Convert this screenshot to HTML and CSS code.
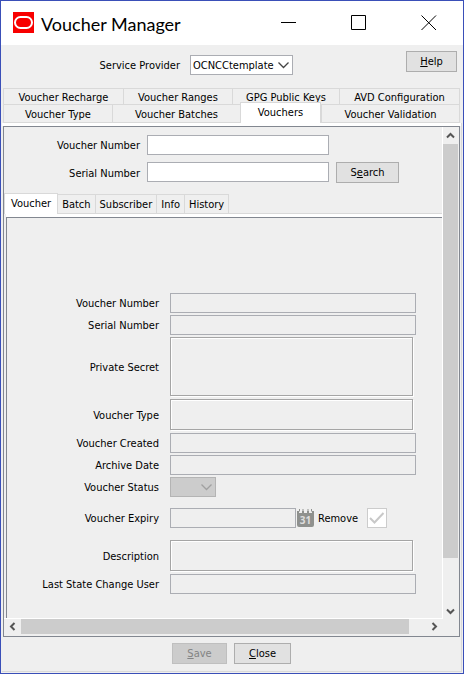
FILE: index.html
```html
<!DOCTYPE html>
<html lang="en">
<head>
<meta charset="utf-8">
<title>Voucher Manager</title>
<link rel="stylesheet" href="styles.css">
</head>
<body>
<div class="window">
  <header class="titlebar">
    <svg class="logo" width="21" height="21" viewBox="0 0 21 21" aria-hidden="true"><rect width="21" height="21" fill="#f80000"/><rect x="2" y="5" width="17" height="11" rx="5.5" fill="none" stroke="#fff" stroke-width="2"/></svg>
    <h1 class="title">Voucher Manager</h1>
    <button class="winbtn" aria-label="Minimize"><svg width="16" height="16" viewBox="0 0 16 16"><path d="M0 7.500H15" stroke="#000" fill="none"/></svg></button>
    <button class="winbtn" aria-label="Maximize"><svg width="16" height="16" viewBox="0 0 16 16"><path d="M.5 .5H14.500V14.500H.5Z" stroke="#000" fill="none"/></svg></button>
    <button class="winbtn" aria-label="Close window"><svg width="16" height="16" viewBox="0 0 16 16"><path d="M.5 .5L15 15M15 .5L.5 15" stroke="#000" fill="none"/></svg></button>
  </header>

  <div class="provider">
    <label for="provider">Service Provider</label>
    <span class="combo combo-provider">
      <select id="provider"><option>OCNCCtemplate</option></select>
      <svg class="chevron" width="11" height="7" viewBox="0 0 11 7" aria-hidden="true"><path d="M.5 .5L5.500 5.500L10.500 .5" fill="none" stroke="#444" stroke-width="1.300"/></svg>
    </span>
    <button class="btn help"><u>H</u>elp</button>
  </div>

  <nav class="tabs">
    <div class="tabrow tabrow-back">
      <button class="tab">Voucher Recharge</button>
      <button class="tab">Voucher Ranges</button>
      <button class="tab">GPG Public Keys</button>
      <button class="tab">AVD Configuration</button>
    </div>
    <div class="tabrow tabrow-front">
      <button class="tab">Voucher Type</button>
      <button class="tab">Voucher Batches</button>
      <button class="tab selected">Vouchers</button>
      <button class="tab">Voucher Validation</button>
    </div>
  </nav>

  <main class="page">
    <div class="pane">
      <div class="content">
        <form class="search">
          <label for="find-number">Voucher Number</label>
          <input id="find-number" type="text">
          <label for="find-serial">Serial Number</label>
          <input id="find-serial" type="text">
          <button class="btn find" type="button">S<u>e</u>arch</button>
        </form>
        <nav class="subtabs">
          <button class="subtab selected">Voucher</button>
          <button class="subtab">Batch</button>
          <button class="subtab">Subscriber</button>
          <button class="subtab">Info</button>
          <button class="subtab">History</button>
        </nav>
        <form class="details">
          <label for="number">Voucher Number</label>
          <input id="number" type="text" disabled>
          <label for="serial">Serial Number</label>
          <input id="serial" type="text" disabled>
          <label for="secret">Private Secret</label>
          <textarea id="secret" class="area tall" disabled></textarea>
          <label for="type">Voucher Type</label>
          <textarea id="type" class="area" disabled></textarea>
          <label for="created">Voucher Created</label>
          <input id="created" type="text" disabled>
          <label for="archive">Archive Date</label>
          <input id="archive" type="text" disabled>
          <label for="status">Voucher Status</label>
          <span class="combo combo-status">
            <select id="status" disabled></select>
            <svg class="chevron" width="11" height="7" viewBox="0 0 11 7" aria-hidden="true"><path d="M.5 .5L5.500 5.500L10.500 .5" fill="none" stroke="#a0a0a0" stroke-width="1.300"/></svg>
          </span>
          <label class="spaced" for="expiry">Voucher Expiry</label>
          <div class="expiry spaced">
            <input id="expiry" type="text" disabled>
            <button class="calendar" type="button" aria-label="Choose date" disabled>
              <svg width="17" height="18" viewBox="0 0 17 18"><path d="M0 2H2V4H5V2H7V4H10V2H12V4H15V2H17V16Q17 18 15 18H2Q0 18 0 16Z" fill="#8f918e"/><path d="M2.500 0V2.500M6 0V2.500M11 0V2.500M14.500 0V2.500" stroke="#8f918e" fill="none"/><text x="8.500" y="15" text-anchor="middle" class="day">31</text></svg>
            </button>
            <label for="remove">Remove</label>
            <span class="check">
              <input id="remove" type="checkbox" checked disabled>
              <svg width="16" height="12" viewBox="0 0 16 12" aria-hidden="true"><path d="M1 6L5.500 10.500L14.500 1" fill="none" stroke="#c8c8c8" stroke-width="2"/></svg>
            </span>
          </div>
          <label class="spaced" for="description">Description</label>
          <textarea id="description" class="area spaced" disabled></textarea>
          <label for="user">Last State Change User</label>
          <input id="user" type="text" disabled>
        </form>
      </div>
      <div class="vbar">
        <svg width="9" height="7" viewBox="0 0 9 7"><path d="M1 5.500L4.500 2L8 5.500" fill="none" stroke="#555" stroke-width="2"/></svg>
        <div class="vthumb"></div>
        <svg width="9" height="7" viewBox="0 0 9 7"><path d="M1 1.500L4.500 5L8 1.500" fill="none" stroke="#555" stroke-width="2"/></svg>
      </div>
      <div class="hbar">
        <svg width="7" height="9" viewBox="0 0 7 9"><path d="M5.500 1L2 4.500L5.500 8" fill="none" stroke="#555" stroke-width="2"/></svg>
        <div class="hthumb"></div>
        <svg width="7" height="9" viewBox="0 0 7 9"><path d="M1.500 1L5 4.500L1.500 8" fill="none" stroke="#555" stroke-width="2"/></svg>
      </div>
    </div>
    <footer class="actions">
      <button class="btn save" disabled><u>S</u>ave</button>
      <button class="btn close"><u>C</u>lose</button>
    </footer>
  </main>
</div>
</body>
</html>
```
FILE: styles.css
```css
* { box-sizing: border-box; }

body {
  margin: 0;
  background: #efefef;
  color: #000;
  font: 11px/14px "DejaVu Sans Condensed", "Noto Sans", sans-serif;
}

button, input, select, textarea {
  margin: 0;
  padding: 0;
  border: 0;
  border-radius: 0;
  color: inherit;
  font: inherit;
}

svg { display: block; }
label { padding-top: 2px; }

.window {
  display: flex;
  flex-direction: column;
  min-height: 100vh;
  border: 1px solid #3a4fb8;
}

.titlebar {
  display: flex;
  align-items: center;
  height: 44px;
  padding: 0 1px 0 12px;
  background: #fff;
}

.logo { margin-bottom: 2px; }

.title {
  flex: 1;
  margin: 0 0 0 7px;
  font: 18px/26px Lato, "Noto Sans", sans-serif;
  padding-top: 2px;
}

.winbtn {
  display: grid;
  place-items: center;
  width: 70px;
  height: 44px;
  background: none;
}

.winbtn:last-child { margin-right: -2px; }

.provider {
  display: flex;
  align-items: flex-start;
  height: 43px;
  padding: 6px 6px 0 0;
}

.provider label {
  width: 179px;
  padding-top: 8px;
  text-align: right;
}

.combo {
  position: relative;
  height: 20px;
}

.combo select {
  display: block;
  width: 100%;
  height: 100%;
  border: 1px solid #abadb3;
  appearance: none;
  background: #fff;
  opacity: 1;
}

.combo-provider { width: 103px; margin: 4px 0 0 10px; }
.combo-provider select { padding: 2px 0 0 2px; }
.combo-status { width: 46px; }
.combo-status select { background: #ccc; border-color: #b4b4b4; }

.chevron {
  position: absolute;
  right: 4px;
  top: 7px;
  pointer-events: none;
}

.btn {
  height: 21px;
  border: 1px solid #adadad;
  background: #e1e1e1;
}

.btn:disabled { background: #ccc; border-color: #bfbfbf; color: #838383; }
.help { width: 51px; margin-left: auto; }

.tabs { padding: 0 2px; }

.tabrow { display: grid; border-right: 1px solid #d9d9d9; }
.tabrow-back { grid-template-columns: 120fr 109fr 107fr 120fr; height: 16px; margin-right: 1px; }
.tabrow-front { grid-template-columns: 109fr 128fr 81fr 138fr; height: 19px; margin-right: 1px; }

.tab {
  padding-top: 2px;
  border: 1px solid #d9d9d9;
  border-width: 1px 0 1px 1px;
  background: #efefef;
  white-space: nowrap;
}

.tabrow-back .tab { border-bottom: 0; line-height: 13px; }

.tabs .selected {
  position: relative;
  margin-top: -2px;
  padding: 0 0 1px;
  border-width: 1px 1px 0;
  background: #fff;
}

.page {
  display: flex;
  flex: 1;
  flex-direction: column;
  margin: 0 1px 1px;
  padding: 3px 1px 0;
  border: 1px solid #d9d9d9;
  border-width: 0 1px 1px 0;
  background: linear-gradient(#fff 3px, #efefef 3px);
}

.pane {
  display: grid;
  flex: 1;
  grid-template: 1fr 17px / 1fr 16px;
  border: 1px solid #828790;
}

.content {
  display: flex;
  flex-direction: column;
  border: 1px solid #fff;
  border-width: 0 1px 1px 0;
}

.search {
  display: grid;
  grid-template-columns: 136px 182px 63px;
  gap: 7px;
  align-items: center;
  padding: 8px 0 0;
}

.search label { text-align: right; }
.search input { align-self: start; }
.search label:nth-of-type(2) { grid-column: 1; }

input[type="text"] {
  width: 100%;
  height: 20px;
  border: 1px solid #abadb3;
  background: #fff;
}

input[type="text"]:disabled { background: #efefef; }

.subtabs {
  display: flex;
  align-items: flex-end;
  margin-top: 10px;
  border-bottom: 1px solid #d9d9d9;
}

.subtab {
  height: 19px;
  padding: 2px 4px 0;
  border: 1px solid #d9d9d9;
  border-width: 1px 1px 0 0;
  background: #efefef;
}

.subtab.selected {
  height: 21px;
  margin-bottom: -1px;
  padding: 0 6px;
  border-left-width: 1px;
  background: #fff;
}

.details {
  display: grid;
  flex: 1;
  grid-template-columns: 1fr 246px;
  gap: 2px 11px;
  align-content: start;
  align-items: center;
  margin: 3px 0 0 2px;
  padding: 75px 26px 10px 0;
  border: 1px solid #828790;
  border-width: 1px 0 0 1px;
  box-shadow: 0 -3px #fff;
}

.details > label { text-align: right; }

.area {
  display: block;
  width: 243px;
  height: 31px;
  margin-bottom: 1px;
  border: 1px solid #a5a5a5;
  background: #efefef;
  box-shadow: inset 1px 1px #fff, 1px 1px #fff;
  resize: none;
}

.tall { height: 59px; }
.details .spaced { margin-top: 9px; }
.details .area.spaced { margin-top: 10px; }

.expiry {
  display: grid;
  grid-template-columns: 126px 17px 51px 20px;
  column-gap: 1px;
  align-items: center;
}

.expiry label { padding-left: 3px; }
.calendar { background: none; }
.day { fill: #ddd; font: bold 10px "Noto Sans", sans-serif; }

.check {
  position: relative;
  width: 20px;
  height: 20px;
}

.check input {
  display: block;
  width: 20px;
  height: 20px;
  border: 1px solid #ccc;
  appearance: none;
  background: #fff;
}

.check svg { position: absolute; left: 2px; top: 4px; }

.vbar {
  display: flex;
  flex-direction: column;
  align-items: center;
  padding: 5px 1px 4px 0;
}

.vthumb {
  flex: 0 1 414px;
  width: 15px;
  margin: 5px 0 auto;
  background: #ccc;
}

.hbar {
  display: flex;
  align-items: center;
  padding: 0 5px 2px;
}

.hthumb {
  flex: 0 1 388px;
  height: 15px;
  margin: 0 auto 0 5px;
  background: #ccc;
}

.actions {
  display: flex;
  justify-content: center;
  gap: 7px;
  padding: 6px 0 7px;
}

.save { width: 55px; }
.close { width: 57px; }
```
